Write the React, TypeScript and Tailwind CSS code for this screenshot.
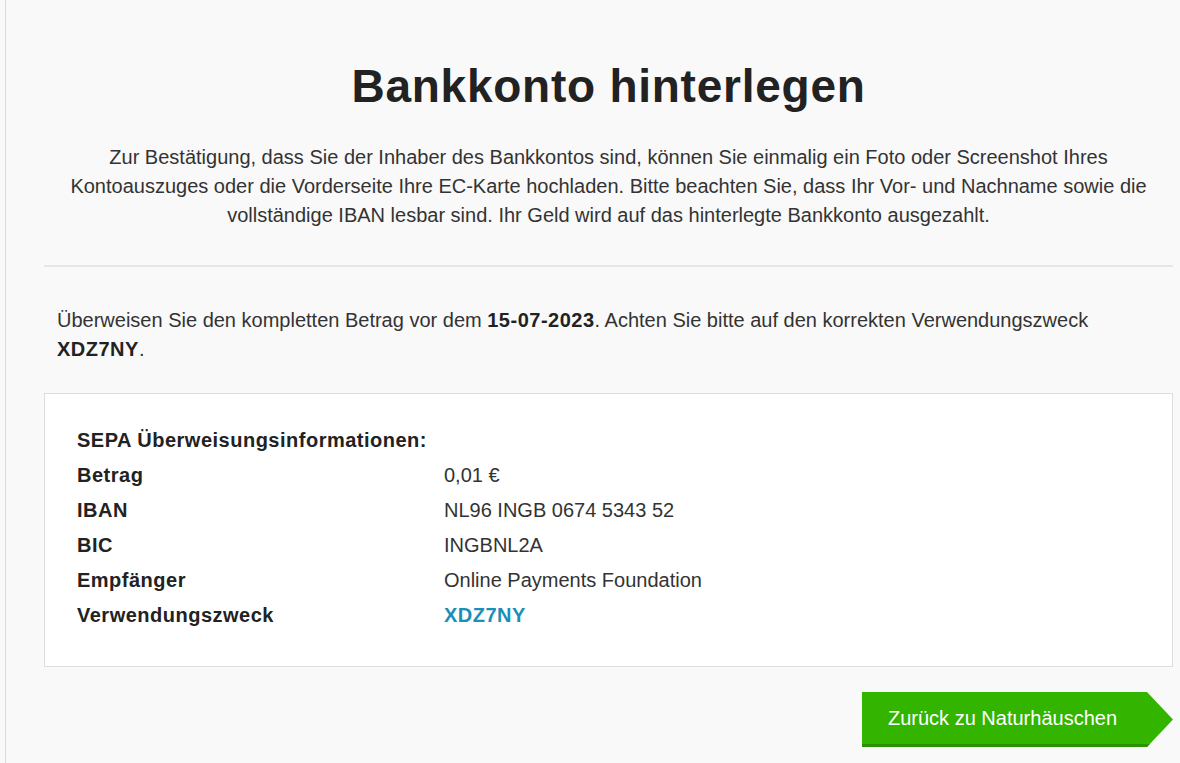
export default function App() {
  const rows = [
    { label: 'Betrag', value: '0,01 €' },
    { label: 'IBAN', value: 'NL96 INGB 0674 5343 52' },
    { label: 'BIC', value: 'INGBNL2A' },
    { label: 'Empfänger', value: 'Online Payments Foundation' },
  ]

  return (
    <div className="min-h-screen bg-[#f9f9f9] font-['Liberation_Sans',Arial,sans-serif] text-[#333]">
      <div className="ml-[5px] min-h-screen border-l border-[#dcdcdc] pl-[38px] pr-[7px]">
        <h1 className="pt-[56px] text-center text-[46px] font-bold leading-[60px] tracking-[0.75px] text-[#222]">
          Bankkonto hinterlegen
        </h1>
        <p className="mt-[27px] px-[10px] text-center text-[20px] leading-[29px]">
          Zur Bestätigung, dass Sie der Inhaber des Bankkontos sind, können Sie einmalig ein Foto oder Screenshot Ihres
          Kontoauszuges oder die Vorderseite Ihre EC-Karte hochladen. Bitte beachten Sie, dass Ihr Vor- und Nachname sowie die
          vollständige IBAN lesbar sind. Ihr Geld wird auf das hinterlegte Bankkonto ausgezahlt.
        </p>
        <hr className="mt-[35px] border-t-2 border-[#e6e6e6]" />
        <p className="mt-[39px] px-[13px] text-[20px] leading-[29px]">
          Überweisen Sie den kompletten Betrag vor dem <b className="tracking-[0.5px] text-[#222]">15-07-2023</b>. Achten Sie
          bitte auf den korrekten Verwendungszweck <b className="tracking-[0.5px] text-[#222]">XDZ7NY</b>.
        </p>
        <div className="mt-[29px] border border-[#dddddd] bg-white px-[32px] pt-[29px] pb-[33px] text-[20px] leading-[35px]">
          <div className="font-bold tracking-[0.5px] text-[#222]">SEPA Überweisungsinformationen:</div>
          {rows.map((r) => (
            <div key={r.label} className="flex">
              <div className="w-[367px] font-bold tracking-[0.5px] text-[#222]">{r.label}</div>
              <div>{r.value}</div>
            </div>
          ))}
          <div className="flex">
            <div className="w-[367px] font-bold tracking-[0.5px] text-[#222]">Verwendungszweck</div>
            <div className="font-bold tracking-[0.5px] text-[#1a8fb8]">XDZ7NY</div>
          </div>
        </div>
        <div className="mt-[25px] flex justify-end">
          <a
            href="#"
            className="flex h-[55px] w-[311px] items-center border-b-[3px] border-[#289200] bg-[#33b500] pl-[26px] text-[20px] text-white [clip-path:polygon(0_0,285px_0,311px_50%,285px_100%,0_100%)]"
          >
            Zurück zu Naturhäuschen
          </a>
        </div>
      </div>
    </div>
  )
}
